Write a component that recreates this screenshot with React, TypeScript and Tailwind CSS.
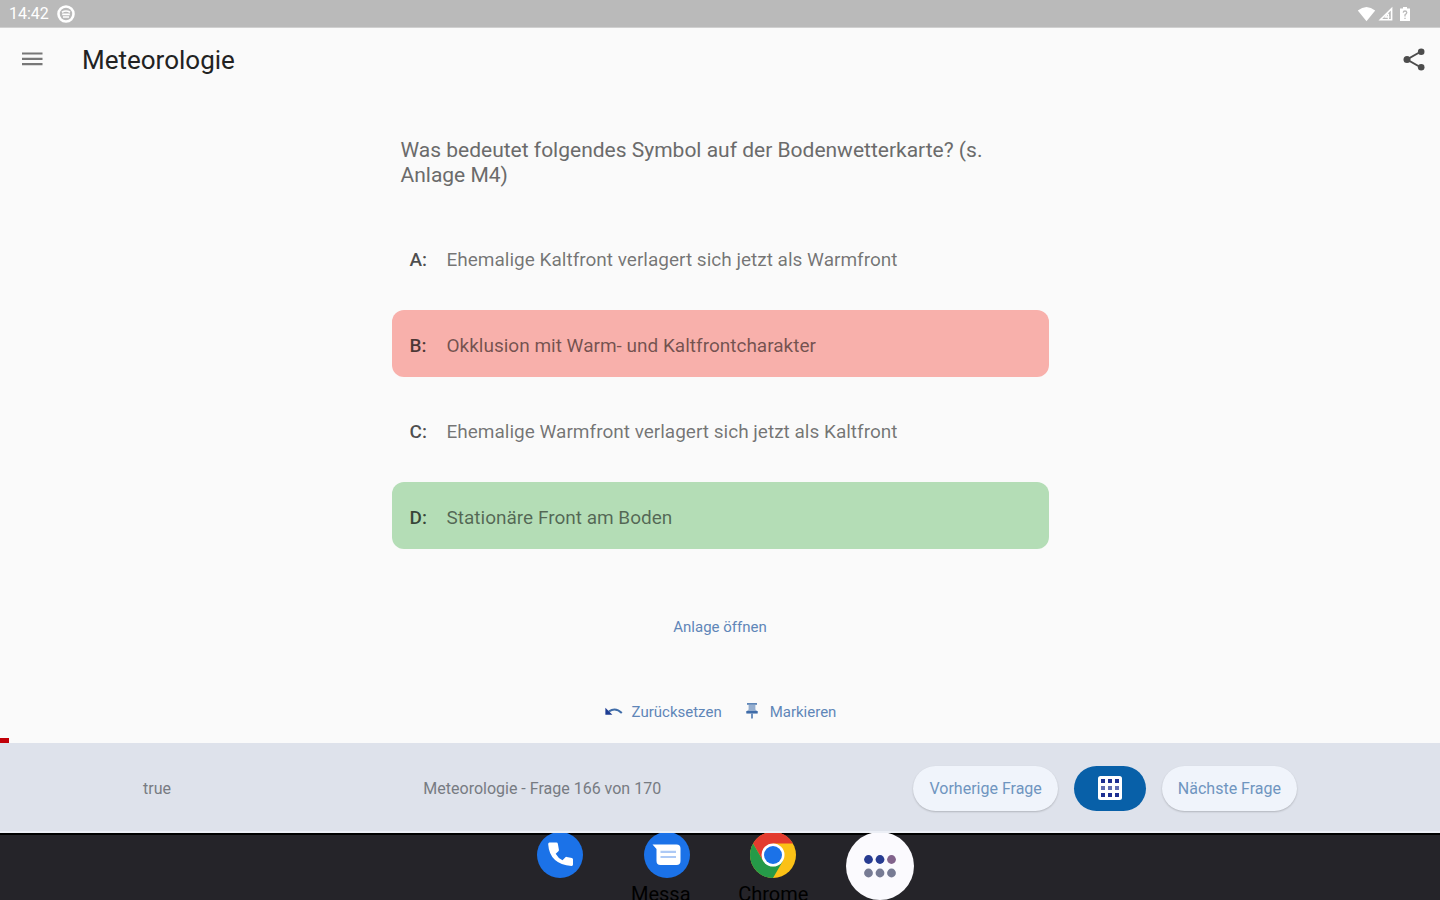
import React from 'react';

type AnswerState = 'plain' | 'wrong' | 'right';

const answers: { letter: string; text: string; state: AnswerState }[] = [
  { letter: 'A:', text: 'Ehemalige Kaltfront verlagert sich jetzt als Warmfront', state: 'plain' },
  { letter: 'B:', text: 'Okklusion mit Warm- und Kaltfrontcharakter', state: 'wrong' },
  { letter: 'C:', text: 'Ehemalige Warmfront verlagert sich jetzt als Kaltfront', state: 'plain' },
  { letter: 'D:', text: 'Stationäre Front am Boden', state: 'right' },
];

const answerBackground: Record<AnswerState, string> = {
  plain: 'bg-transparent',
  wrong: 'bg-[#f8b0ab]',
  right: 'bg-[#b4ddb6]',
};

function StatusBar() {
  return (
    <div className="flex h-7 items-center justify-between border-b border-[#d0d0d0] bg-[#bababa] pl-[9px] pr-7 text-white">
      <div className="flex items-center gap-2">
        <span className="text-base leading-5">14:42</span>
        <svg className="size-[18px]" viewBox="0 0 18 18" fill="none" aria-hidden="true">
          <circle cx="9" cy="9" r="7.5" stroke="currentColor" strokeWidth="2.6" />
          <path d="M5 7.2Q9 4.800 13 7.200M5.200 9.400h7.600M6 12h6" stroke="currentColor" strokeWidth="1.6" />
        </svg>
      </div>
      <div className="flex items-center gap-0.5">
        <svg className="h-4 w-[19px]" viewBox="0 0 19 16" fill="currentColor" aria-hidden="true">
          <path d="M9.5 15.2 0.8 4.6Q9.5-2.6 18.2 4.6Z" />
        </svg>
        <svg className="size-4" viewBox="0 0 16 16" fill="none" aria-hidden="true">
          <path d="M2.4 13.8H13.6V2.6Z" stroke="currentColor" strokeWidth="1.6" />
          <path d="M10 7 7.4 11h4M10.4 8v5" stroke="currentColor" strokeWidth="1.3" />
        </svg>
        <svg className="ml-0.5 h-4 w-3.5" viewBox="0 0 12 16" fill="none" aria-hidden="true">
          <path d="M4 1h4v1.400h3V15H1V2.400H4Z" fill="currentColor" />
          <path d="M4.2 6.6Q4.4 5 6 5t1.8 1.6Q7.8 7.8 6 8.8v1.6M6 11.8v1.3" stroke="#bababa" strokeWidth="1.3" />
        </svg>
      </div>
    </div>
  );
}

function AppBar() {
  return (
    <header className="flex h-16 items-center pl-5 pr-3.5">
      <button type="button" aria-label="Menu" className="text-[#777]">
        <svg className="size-6" viewBox="0 0 24 24" stroke="currentColor" strokeWidth="2.2" aria-hidden="true">
          <path d="M2 5.500h20.500M2 10.800h20.500M2 16.100h20.500" />
        </svg>
      </button>
      <h1 className="ml-[38px] flex-1 text-[26px] leading-8 text-[#222]">Meteorologie</h1>
      <button type="button" aria-label="Share" className="text-[#4c4c4c]">
        <svg className="size-6" viewBox="0 0 24 24" fill="currentColor" aria-hidden="true">
          <path d="M19 3.500 5 11.500l14 8" fill="none" stroke="currentColor" strokeWidth="2" />
          <circle cx="19.200" cy="3.800" r="3.300" />
          <circle cx="5" cy="11.500" r="3.500" />
          <circle cx="19.200" cy="19.200" r="3.300" />
        </svg>
      </button>
    </header>
  );
}

function Question() {
  return (
    <main className="mx-auto flex w-full max-w-[657px] flex-1 flex-col items-center pt-[46px]">
      <h2 className="w-full px-[9px] pr-14 text-[21px] leading-[25px] text-[#6b6b6b]">
        Was bedeutet folgendes Symbol auf der Bodenwetterkarte? (s. Anlage M4)
      </h2>
      <div className="mt-9 flex w-full flex-col gap-[19px]">
        {answers.map((a) => (
          <button
            key={a.letter}
            type="button"
            className={`flex h-[67px] items-center rounded-xl px-[18px] pt-1 text-left text-[19px] leading-6 ${answerBackground[a.state]}`}
          >
            <span className="w-[37px] font-medium text-black/70">{a.letter}</span>
            <span className="text-black/55">{a.text}</span>
          </button>
        ))}
      </div>
      <button type="button" className="mt-[66px] h-6 text-[15px] leading-6 text-[#5f86b8]">
        Anlage öffnen
      </button>
      <div className="mt-[61px] flex gap-5 text-[15px] leading-6 text-[#5f86b8]">
        <button type="button" className="flex items-center gap-2">
          <svg className="size-5" viewBox="0 0 20 20" fill="none" aria-hidden="true">
            <path d="M5 9.4Q11.5 4.8 17.8 11" stroke="#3f6ca8" strokeWidth="2" />
            <path d="M1.4 5.8v7h7Z" fill="#1d3c93" />
          </svg>
          Zurücksetzen
        </button>
        <button type="button" className="flex items-center gap-2">
          <svg className="size-5" viewBox="0 0 20 20" fill="#5f86b8" aria-hidden="true">
            <path d="M5 1h10v2h-1.6v4.6l2.2 1.8v2.2H4.4V9.4l2.2-1.8V3H5Z" opacity="0.65" />
            <path d="M4.4 9h11.2v2.4H4.4Z" fill="#3f6ca8" />
            <path d="M5 1h10v1.6H5ZM9.1 11.4h1.8V16l-.9 1-.9-1Z" />
          </svg>
          Markieren
        </button>
      </div>
    </main>
  );
}

function NavigationBar() {
  const pill =
    'h-[45px] rounded-full bg-[#f0f4fb] px-4 pt-0.5 text-base text-[#6f95c0] shadow-[0_1px_2px_rgba(0,0,0,0.2)]';
  return (
    <footer className="flex h-[90px] items-center justify-between border-b-2 border-[#eceff6] bg-[#dee2eb] px-[143px] text-base text-[#777b82]">
      <span className="pt-1">true</span>
      <span className="pt-1">Meteorologie - Frage 166 von 170</span>
      <div className="flex items-center gap-4 pt-0.5">
        <button type="button" className={pill}>Vorherige Frage</button>
        <button
          type="button"
          aria-label="Overview"
          className="flex h-[45px] w-[72px] items-center justify-center rounded-full bg-[#0860a8]"
        >
          <svg className="size-6" viewBox="0 0 24 24" aria-hidden="true">
            <rect width="24" height="24" rx="2.5" fill="#fff" />
            <g fill="#1d2f91">
              <path d="M3 3h4v4H3zM10 3h4v4h-4zM17 3h4v4h-4zM3 17h4v4H3zM10 17h4v4h-4zM17 17h4v4h-4z" />
              <path d="M3 10h4v4H3zM10 10h4v4h-4zM17 10h4v4h-4z" opacity="0.7" />
            </g>
          </svg>
        </button>
        <button type="button" className={pill}>Nächste Frage</button>
      </div>
    </footer>
  );
}

function Dock() {
  return (
    <nav className="flex h-[67px] justify-center overflow-hidden bg-[#252429] shadow-[inset_0_2px_0_#000]">
      <div className="grid w-full max-w-[426px] grid-cols-4 justify-items-center text-[20px] leading-6 text-black">
        <a href="#phone" aria-label="Phone">
          <svg className="h-[45px] w-[46px]" viewBox="0 1 46 45" aria-hidden="true">
            <circle cx="23" cy="23" r="23" fill="#1b72e8" />
            <path
              d="M12.4 10.500q-1.300 0-1.200 1.700Q12.500 32 34.500 34q1.500.1 1.500-1.400v-5.200q0-1.100-1.100-1.400l-5.200-1.100q-.9-.2-1.500.5l-2.700 2.900q-4.400-2.200-6.800-6.600l2.700-2.400q.7-.6.5-1.500l-1-5.800q-.2-1.400-1.500-1.400Z"
              fill="#fff"
            />
          </svg>
        </a>
        <a href="#messages" className="flex flex-col items-center">
          <svg className="h-[45px] w-[46px] shrink-0" viewBox="0 1 46 45" aria-hidden="true">
            <circle cx="23" cy="23" r="23" fill="#1b72e8" />
            <path d="M8.500 12.500h24q4 0 4 4v12.500q0 4-4 4H16.500q-4 0-4-4V17Z" fill="#fff" />
            <path d="M16.500 19.800h15.500M16.500 25h15.500" stroke="#adc9f5" strokeWidth="2.2" />
          </svg>
          <span className="mt-1 pr-3">Messa</span>
        </a>
        <a href="#chrome" className="flex flex-col items-center">
          <svg className="h-[45px] w-[46px] shrink-0" viewBox="0 1 46 45" aria-hidden="true">
            <circle cx="23" cy="23" r="23" fill="#fbc116" />
            <path d="M23 0A23 23 0 0 1 42.900 11.500H23L13 28.800 3.100 11.500A23 23 0 0 1 23 0Z" fill="#e33b2e" />
            <path d="M3.100 11.500 13 28.800 23 34.500 33 28.800 23 46A23 23 0 0 1 3.100 11.500Z" fill="#259a48" />
            <circle cx="23" cy="23" r="11.500" fill="#fff" />
            <circle cx="23" cy="23" r="9" fill="#1b72e8" />
          </svg>
          <span className="mt-1">Chrome</span>
        </a>
        <a href="#apps" aria-label="Apps">
          <svg className="h-[67px] w-[70px]" viewBox="0 2 70 67" aria-hidden="true">
            <circle cx="35" cy="35" r="34" fill="#fbfafe" />
            <g fill="#273b91">
              <circle cx="23.500" cy="28.500" r="4.400" />
              <circle cx="35" cy="28.500" r="4.400" />
              <circle cx="46.500" cy="28.500" r="4.400" fill="#82638c" />
            </g>
            <g fill="#777b94">
              <circle cx="23.500" cy="42" r="4.400" />
              <circle cx="35" cy="42" r="4.400" />
              <circle cx="46.500" cy="42" r="4.400" />
            </g>
          </svg>
        </a>
      </div>
    </nav>
  );
}

export default function App() {
  return (
    <div className="flex min-h-screen flex-col bg-[#fafafa] font-['Roboto','Liberation_Sans',sans-serif]">
      <StatusBar />
      <AppBar />
      <Question />
      <div className="h-[5px] w-[9px] bg-[#c10008]" />
      <NavigationBar />
      <Dock />
    </div>
  );
}
